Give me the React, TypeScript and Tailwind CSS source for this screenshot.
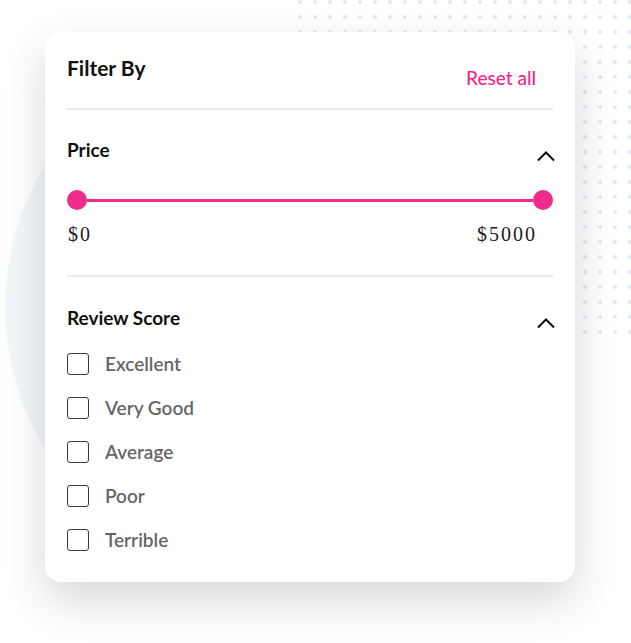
import React from 'react';

const scores = ['Excellent', 'Very Good', 'Average', 'Poor', 'Terrible'];

const ChevronUp: React.FC<{ className?: string }> = ({ className }) => (
  <svg width="20" height="12" viewBox="0 0 20 12" className={className}>
    <polyline points="2,10.5 10,2.5 18,10.5" fill="none" stroke="#111" strokeWidth="2" />
  </svg>
);

const App: React.FC = () => {
  return (
    <div className="relative w-[631px] h-[643px] overflow-hidden bg-white font-['Lato','Noto_Sans',sans-serif]">
      {/* Background decorations */}
      <div className="absolute left-[5px] top-[36px] w-[542px] h-[542px] rounded-full bg-[#f2f7f9]" />
      <svg className="absolute left-[293px] top-0" width="338" height="336">
        <defs>
          <pattern id="dots" width="15" height="15" patternUnits="userSpaceOnUse">
            <circle cx="7" cy="2" r="2" fill="#e1e9f8" />
          </pattern>
        </defs>
        <rect width="338" height="336" fill="url(#dots)" />
      </svg>

      {/* Filter card */}
      <div className="relative ml-[45px] mt-[32px] w-[530px] rounded-[16px] bg-white shadow-[0_18px_45px_rgba(0,0,0,0.16)] px-[22px] pt-[24px] pb-[31px]">
        {/* Header */}
        <div className="flex justify-between items-start h-[52px]">
          <h2 className="text-[21px] leading-6 font-bold text-[#111]">Filter By</h2>
          <button className="mt-[10px] mr-[17px] text-[19px] leading-6 font-medium text-[#f0288c]">Reset all</button>
        </div>
        <div className="h-[2px] bg-[#ebebeb]" />

        {/* Price */}
        <div className="flex justify-between items-start mt-[28px]">
          <h3 className="text-[19px] leading-6 font-bold text-[#111]">Price</h3>
          <ChevronUp className="mt-[12px] mr-[-3px]" />
        </div>
        <div className="flex items-center h-[20px] mt-[28px]">
          <div className="w-5 h-5 rounded-full bg-[#ef2b8b] shrink-0" />
          <div className="flex-1 h-[3px] bg-[#ef2b8b]" />
          <div className="w-5 h-5 rounded-full bg-[#ef2b8b] shrink-0" />
        </div>
        <div className="flex justify-between mt-[12px] text-[20px] leading-6 text-[#222] tracking-[2px] font-['Liberation_Serif',serif]">
          <span className="ml-[1px]">$0</span>
          <span className="mr-[16px]">$5000</span>
        </div>
        <div className="h-[2px] bg-[#ebebeb] mt-[29px]" />

        {/* Review Score */}
        <div className="flex justify-between items-start mt-[29px]">
          <h3 className="text-[19px] leading-6 font-bold text-[#111]">Review Score</h3>
          <ChevronUp className="mt-[11px] mr-[-3px]" />
        </div>
        <div className="flex flex-col gap-[22px] mt-[23px]">
          {scores.map((s) => (
            <label key={s} className="flex items-center gap-4 h-[22px] cursor-pointer">
              <span className="w-[22px] h-[22px] rounded-[3px] border-[1.5px] border-[#3a3a3a] shrink-0" />
              <span className="text-[19px] leading-6 font-semibold text-[#666]">{s}</span>
            </label>
          ))}
        </div>
      </div>
    </div>
  );
};

export default App;
